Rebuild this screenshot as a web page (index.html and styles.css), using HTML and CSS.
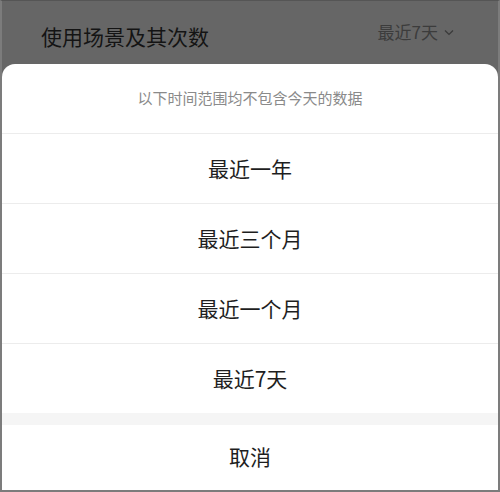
FILE: index.html
```html
<!DOCTYPE html>
<html lang="zh-CN">
<head>
<meta charset="utf-8">
<link rel="stylesheet" href="styles.css">
</head>
<body>
<div class="frame">
  <div class="header">
    <div class="title">使用场景及其次数</div>
    <div class="range">最近7天<svg class="chev" width="10" height="7" viewBox="0 0 10 7"><path d="M1 1.5 L5 5.5 L9 1.5" fill="none" stroke="#3a3a3a" stroke-width="1.2"/></svg></div>
  </div>
  <div class="sheet">
    <div class="note">以下时间范围均不包含今天的数据</div>
    <div class="option">最近一年</div>
    <div class="option">最近三个月</div>
    <div class="option">最近一个月</div>
    <div class="option last">最近7天</div>
    <div class="gap"></div>
    <div class="cancel">取消</div>
  </div>
</div>
</body>
</html>
```
FILE: styles.css
```css
html, body {
  margin: 0;
  padding: 0;
}
body {
  font-family: "Noto Sans CJK SC", "Noto Sans", sans-serif;
}
.frame {
  width: 500px;
  height: 492px;
  box-sizing: border-box;
  border: 2px solid #7c7c7c;
  border-top: 1px solid #555;
  background: #666666;
  display: flex;
  flex-direction: column;
  overflow: hidden;
}
.header {
  height: 63px;
  flex: none;
  display: flex;
  align-items: center;
  justify-content: space-between;
  padding: 0 44px 0 39px;
}
.title {
  font-size: 21px;
  color: #141414;
  line-height: 1;
  margin-top: 8px;
}
.range {
  font-size: 17px;
  color: #3c3c3c;
  display: flex;
  align-items: center;
  gap: 6px;
  margin-top: -2px;
}
.chev {
  display: block;
  margin-top: 1px;
}
.sheet {
  flex: 1;
  background: #fff;
  border-radius: 13px 13px 0 0;
  display: flex;
  flex-direction: column;
}
.note {
  height: 70px;
  border-bottom: 1px solid #ececec;
  display: flex;
  align-items: center;
  justify-content: center;
  font-size: 15px;
  color: #8a8a8a;
  padding-bottom: 2px;
  box-sizing: border-box;
}
.option {
  height: 70px;
  box-sizing: border-box;
  border-bottom: 1px solid #ececec;
  display: flex;
  align-items: center;
  justify-content: center;
  font-size: 21px;
  color: #1e1e1e;
  padding-bottom: 2px;
}
.option.last {
  border-bottom: none;
  height: 69px;
}
.gap {
  height: 12px;
  background: #f5f5f5;
  flex: none;
}
.cancel {
  flex: 1;
  display: flex;
  align-items: center;
  justify-content: center;
  font-size: 21px;
  color: #1e1e1e;
  padding-bottom: 4px;
}
```
